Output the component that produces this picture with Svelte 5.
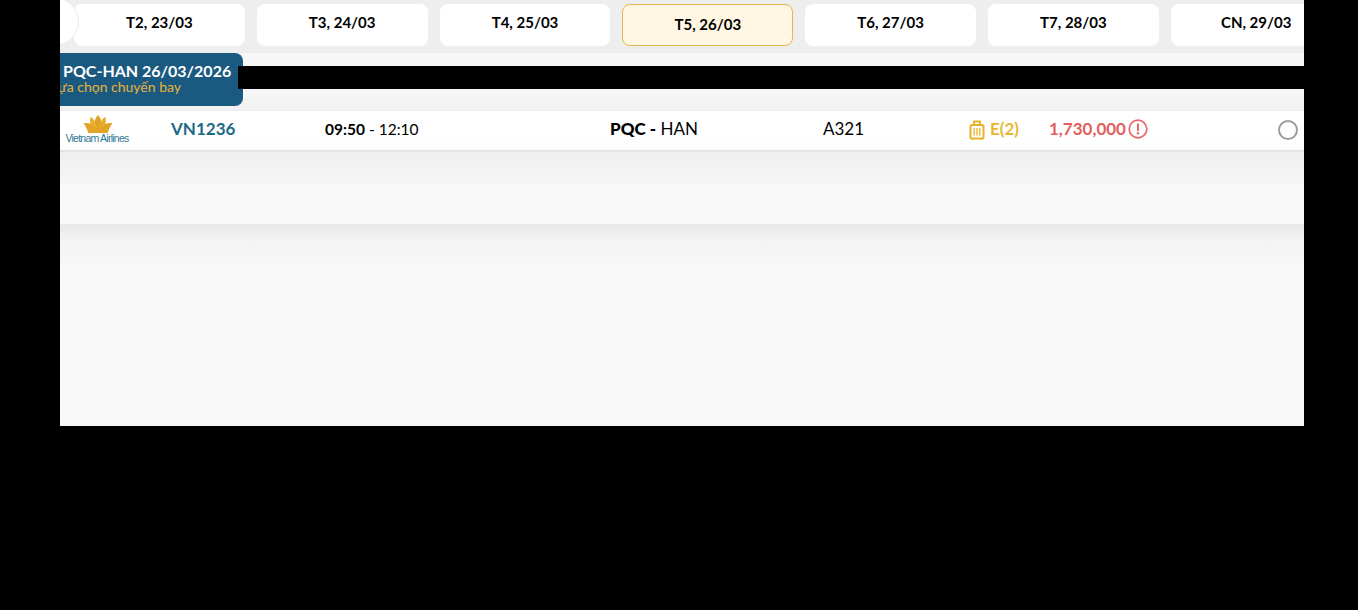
<script>
  const days = [
    { label: 'T2, 23/03' },
    { label: 'T3, 24/03' },
    { label: 'T4, 25/03' },
    { label: 'T5, 26/03', active: true },
    { label: 'T6, 27/03' },
    { label: 'T7, 28/03' },
    { label: 'CN, 29/03' }
  ];
</script>

<div class="page">
  <main class="panel">
    <nav class="tabs">
      {#each days as d}
        <button class="tab" class:active={d.active}>{d.label}</button>
      {/each}
      <span class="round"></span>
    </nav>

    <section class="head">
      <div class="badge">
        <div class="title">PQC-HAN 26/03/2026</div>
        <div class="sub">Lựa chọn chuyến bay</div>
      </div>
      <div class="redact"></div>
    </section>

    <section class="results">
      <div class="row">
        <div class="logo">
          <svg width="30" height="18" viewBox="0 0 30 18" aria-hidden="true">
            <path fill="#e0a526" d="M15 0c2.500 2.800 3.600 5.600 3.300 8.600-.2 2.200-1.400 4.200-3.300 6.400-1.900-2.200-3.100-4.200-3.300-6.400C11.400 5.600 12.500 2.800 15 0z"/>
            <path fill="#e8ae2c" d="M7.500 2c2.600 1.100 4 2.900 4.500 5.300.5 2.400 1.200 4.800 3 7.700-3.600-.4-6.400-2-7.300-5-.7-2.400-.8-5-.2-8zM22.500 2c-2.600 1.100-4 2.900-4.500 5.300-.5 2.400-1.200 4.800-3 7.700 3.600-.4 6.400-2 7.300-5 .7-2.400.8-5 .2-8z"/>
            <path fill="#e3a425" d="M.5 8.300c3.600-.7 6.500-.1 8.500 1.700 1.700 1.600 3.600 3 6 3.600 2.400-.6 4.300-2 6-3.600 2-1.800 4.900-2.400 8.500-1.700-2 2.500-3.600 5.500-4.700 9.700H5.200C4.100 13.800 2.500 10.800.5 8.300z"/>
          </svg>
          <span class="brand">Vietnam Airlines</span>
        </div>
        <div class="flight">VN1236</div>
        <div class="time"><b>09:50</b> - 12:10</div>
        <div class="route"><b>PQC -</b> HAN</div>
        <div class="plane">A321</div>
        <div class="cabin">
          <svg width="16" height="20" viewBox="0 0 16 20" fill="none" stroke="#e8b32c" stroke-width="2" aria-hidden="true">
            <rect x="1.500" y="5" width="13" height="13.500" rx="1.600"/>
            <path d="M5 5V1.400h6V5" />
            <path stroke-width="1.300" d="M5.200 8v7.500M8 8v7.500M10.800 8v7.500"/>
            <path d="M3.800 18.500v1.300M12.200 18.500v1.300"/>
          </svg>
          <span>E(2)</span>
        </div>
        <div class="price">
          <span>1,730,000</span>
          <svg width="20" height="20" viewBox="0 0 20 20" aria-hidden="true">
            <circle cx="10" cy="10" r="8.800" fill="none" stroke="#e46a68" stroke-width="1.700"/>
            <path d="M10 5.200v6" stroke="#e46a68" stroke-width="2" stroke-linecap="round"/>
            <circle cx="10" cy="14.200" r="1.200" fill="#e46a68"/>
          </svg>
        </div>
        <span class="radio"></span>
      </div>
      <div class="empty"></div>
      <div class="rest"></div>
    </section>
  </main>
</div>

<style>
  :global(body) {
    margin: 0;
    background: #000;
  }

  .page {
    width: 1358px;
    height: 610px;
    padding-left: 60px;
    box-sizing: border-box;
    background: #000;
    font-family: Lato, "Liberation Sans", sans-serif;
    overflow: hidden;
  }

  .panel {
    width: 1244px;
    height: 426px;
    overflow: hidden;
    background: #f8f8f8;
    display: flex;
    flex-direction: column;
  }

  .tabs {
    flex: none;
    height: 53px;
    box-sizing: border-box;
    padding: 4px 0 0 14px;
    background: #eeeeef;
    display: flex;
    gap: 12px;
    position: relative;
  }

  .round {
    position: absolute;
    left: -30px;
    top: -3px;
    width: 49px;
    height: 49px;
    box-sizing: border-box;
    border-radius: 50%;
    background: #fff;
    border: 1px solid #e9e9e9;
  }

  .tab {
    flex: none;
    width: 170.8px;
    height: 42px;
    padding: 0 0 6px;
    border: 0;
    border-radius: 8px;
    background: #fff;
    color: #000;
    font: 700 15px/36px Lato, "Liberation Sans", sans-serif;
    text-align: center;
  }

  .tab.active {
    padding: 0 0 3px;
    background: #fff6e3;
    border: 1px solid #e8b54a;
    box-sizing: border-box;
  }

  .head {
    flex: none;
    height: 57px;
    position: relative;
    background: linear-gradient(#f7f7f7 0, #f7f7f7 36px, #f1f1f2 57px);
  }

  .badge {
    width: 183px;
    height: 53px;
    box-sizing: border-box;
    padding: 9px 0 0 3px;
    background: #1b5a80;
    border-radius: 0 8px 8px 0;
    white-space: nowrap;
    overflow: hidden;
  }

  .title {
    color: #fff;
    font-weight: 700;
    font-size: 16px;
    line-height: 18px;
  }

  .sub {
    margin-left: -12px;
    margin-top: -1px;
    color: #e7b23a;
    font-size: 14px;
    line-height: 15px;
  }

  .redact {
    position: absolute;
    left: 178px;
    right: 0;
    top: 13px;
    height: 23px;
    background: #000;
  }

  .results {
    flex: 1;
    display: flex;
    flex-direction: column;
  }

  .row {
    flex: none;
    height: 42px;
    box-sizing: border-box;
    padding-bottom: 4px;
    border-top: 1px solid #ececec;
    border-bottom: 2px solid #e5e5e6;
    background: linear-gradient(#fff 70%, #fbfbfb);
    display: grid;
    grid-template-columns: 111px 154px 285px 213px 146px 80px 229px 1fr;
    align-items: center;
    color: #000;
    font-size: 17px;
  }

  .logo {
    display: flex;
    flex-direction: column;
    align-items: center;
    width: 76px;
    height: 29px;
    margin-top: 1px;
  }

  .logo svg {
    display: block;
    flex: none;
  }

  .brand {
    margin-left: -2px;
    color: #2e7a95;
    font: 10.5px/10px "Liberation Sans", sans-serif;
    letter-spacing: -0.75px;
    white-space: nowrap;
  }

  .flight {
    color: #1b6a85;
    font-weight: 700;
    font-size: 17px;
  }

  .time {
    font-size: 15.5px;
  }

  .route b {
    font-weight: 900;
  }

  .cabin {
    display: flex;
    align-items: center;
    gap: 5px;
    color: #e9b633;
    font-weight: 700;
    font-size: 17px;
  }

  .cabin svg {
    margin-top: 3px;
  }

  .price {
    display: flex;
    align-items: center;
    gap: 2px;
    color: #e25f5e;
    font-weight: 700;
    font-size: 17px;
  }

  .radio {
    width: 20px;
    height: 20px;
    box-sizing: border-box;
    border: 2px solid #9a9a9a;
    border-radius: 50%;
    background: #fff;
    margin-top: 2px;
  }

  .empty {
    flex: none;
    height: 72px;
    background: linear-gradient(#eeeeef, #f3f3f4 18px, #f8f8f8 36px);
  }

  .rest {
    flex: 1;
    background: linear-gradient(#e9e9ea, #f4f4f4 18px, #f8f8f8 40px);
  }
</style>
